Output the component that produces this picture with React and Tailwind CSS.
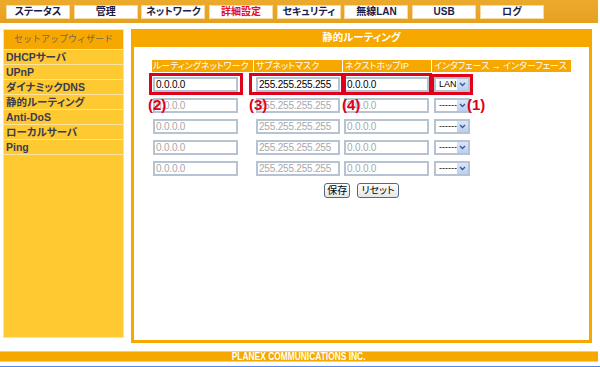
import React from "react";

const tabs = ["ステータス", "管理", "ネットワーク", "詳細設定", "セキュリティ", "無線LAN", "USB", "ログ"];
const menu = ["DHCPサーバ", "UPnP", "ダイナミックDNS", "静的ルーティング", "Anti-DoS", "ローカルサーバ", "Ping"];

function Field({ value, dim, className }) {
  return (
    <div
      className={
        "h-[15px] border-2 border-[#b5c3d3] bg-white flex items-center px-[1px] text-[10px] leading-none whitespace-nowrap overflow-hidden tracking-[-0.2px] " +
        (dim ? "text-[#a8a8a8] " : "text-black ") +
        className
      }
    >
      {value}
    </div>
  );
}

function Select({ value }) {
  return (
    <div className="ml-[5px] w-[36px] h-[15px] border-2 border-[#b5c3d3] bg-white flex items-center">
      <span className="flex-1 pl-[3px] text-[9px] leading-[9px] text-black">{value}</span>
      <span className="w-[11px] h-full bg-gradient-to-b from-[#dbe6f8] to-[#bccff0] flex items-center justify-center">
        <svg width="7" height="5" viewBox="0 0 7 5">
          <path d="M1 1 L3.5 3.5 L6 1" stroke="#3a5a9c" strokeWidth="1.4" fill="none" />
        </svg>
      </span>
    </div>
  );
}

function Row({ first }) {
  const dim = !first;
  return (
    <div className="flex h-[15px]">
      <Field value="0.0.0.0" dim={dim} className="ml-[1px] w-[85px]" />
      <Field value="255.255.255.255" dim={dim} className="ml-[18px] w-[84px]" />
      <Field value="0.0.0.0" dim={dim} className="ml-[4px] w-[85px]" />
      <Select value={first ? "LAN" : "------"} />
    </div>
  );
}

export default function App() {
  return (
    <div className="relative w-[600px] h-[367px] overflow-hidden bg-white font-['Liberation_Sans','Noto_Sans_CJK_JP',sans-serif]">
      {/* top tabs */}
      <div className="h-[23px] bg-gradient-to-b from-[#ecaa2c] to-[#e6a020] flex items-start pt-[5px] pl-[6px] gap-[3.7px] mr-[2px]">
        {tabs.map((t) => (
          <div
            key={t}
            className={
              "w-[64px] h-[14px] bg-white border border-[#f6dca4] flex items-center justify-center text-[10px] font-bold leading-none [font-feature-settings:'palt'] " +
              (t === "詳細設定" ? "text-[#e1101e]" : "text-[#1b1b48]")
            }
          >
            {t}
          </div>
        ))}
      </div>

      <div className="mt-[6px] flex gap-[7px]">
        {/* sidebar */}
        <div className="ml-[3px] w-[121px] h-[309px] bg-[#fec931] border border-[#fde3a0] flex flex-col">
          <div className="h-[20px] bg-[#f6a800] flex items-center justify-center text-[9px] text-[#75694f] border-b border-[#fde3a0]">
            セットアップウィザード
          </div>
          {menu.map((m) => (
            <div
              key={m}
              className="h-[15px] border-b border-[#fde3a0] px-[2px] text-[10.5px] leading-[14px] font-bold text-[#3b3b50] [font-feature-settings:'palt']"
            >
              {m}
            </div>
          ))}
        </div>

        {/* main panel */}
        <div className="w-[461px] h-[314px] bg-[#f6a800] px-[3px] pb-[3px] flex flex-col">
          <div className="h-[18px] flex items-center justify-center text-white font-bold text-[10.5px] [font-feature-settings:'palt']">
            静的ルーティング
          </div>
          <div className="flex-1 bg-white pl-[18px] pt-[13px]">
            <div className="w-[419px]">
              <div className="flex h-[12px] text-white text-[9px] leading-[12px] [font-feature-settings:'palt'] whitespace-nowrap">
                <div className="w-[101px] bg-[#f6a800] pl-[1px]">ルーティングネットワーク</div>
                <div className="ml-[1px] w-[88px] bg-[#f6a800] pl-[2px]">サブネットマスク</div>
                <div className="ml-[1px] w-[88px] bg-[#f6a800] pl-[2px]">ネクストホップIP</div>
                <div className="ml-[1px] w-[139px] bg-[#f6a800] pl-[2px]">インタフェース → インターフェース</div>
              </div>
              <div className="mt-[5px] flex flex-col gap-[6px]">
                <Row first />
                <Row />
                <Row />
                <Row />
                <Row />
              </div>
              <div className="mt-[7px] flex justify-center gap-[7px]">
                <div className="h-[15px] px-[2px] flex items-center text-[10px] leading-none border border-[#50698a] rounded-[3px] bg-gradient-to-b from-white to-[#e6e6e6]">
                  保存
                </div>
                <div className="h-[15px] px-[3px] flex items-center text-[10px] leading-none border border-[#50698a] rounded-[3px] bg-gradient-to-b from-white to-[#e6e6e6] [font-feature-settings:'palt']">
                  リセット
                </div>
              </div>
            </div>
          </div>
        </div>
      </div>

      {/* footer */}
      <div className="mt-[8px] h-[11px] bg-[#f6a800] flex items-center justify-center border-y border-[#fbcf70] mr-[2px]">
        <span className="inline-block text-white text-[10.5px] font-bold leading-none scale-x-[0.8]">
          PLANEX COMMUNICATIONS INC.
        </span>
      </div>
      <div className="mt-[4px] h-[1px] bg-[#4d88e6]" />

      {/* annotations */}
      <div className="absolute left-[149px] top-[73px] w-[94px] h-[22px] border-[3px] border-[#e1001a]" />
      <div className="absolute left-[249px] top-[73px] w-[95px] h-[22px] border-[3px] border-[#e1001a]" />
      <div className="absolute left-[343px] top-[73px] w-[89px] h-[22px] border-[3px] border-[#e1001a]" />
      <div className="absolute left-[431px] top-[74px] w-[42px] h-[21px] border-[3px] border-[#e1001a]" />
      <div className="absolute left-[148px] top-[97px] text-[15px] font-bold text-[#e1001a] leading-none">(2)</div>
      <div className="absolute left-[249px] top-[97px] text-[15px] font-bold text-[#e1001a] leading-none">(3)</div>
      <div className="absolute left-[342px] top-[97px] text-[15px] font-bold text-[#e1001a] leading-none">(4)</div>
      <div className="absolute left-[467px] top-[97px] text-[15px] font-bold text-[#e1001a] leading-none">(1)</div>
    </div>
  );
}
